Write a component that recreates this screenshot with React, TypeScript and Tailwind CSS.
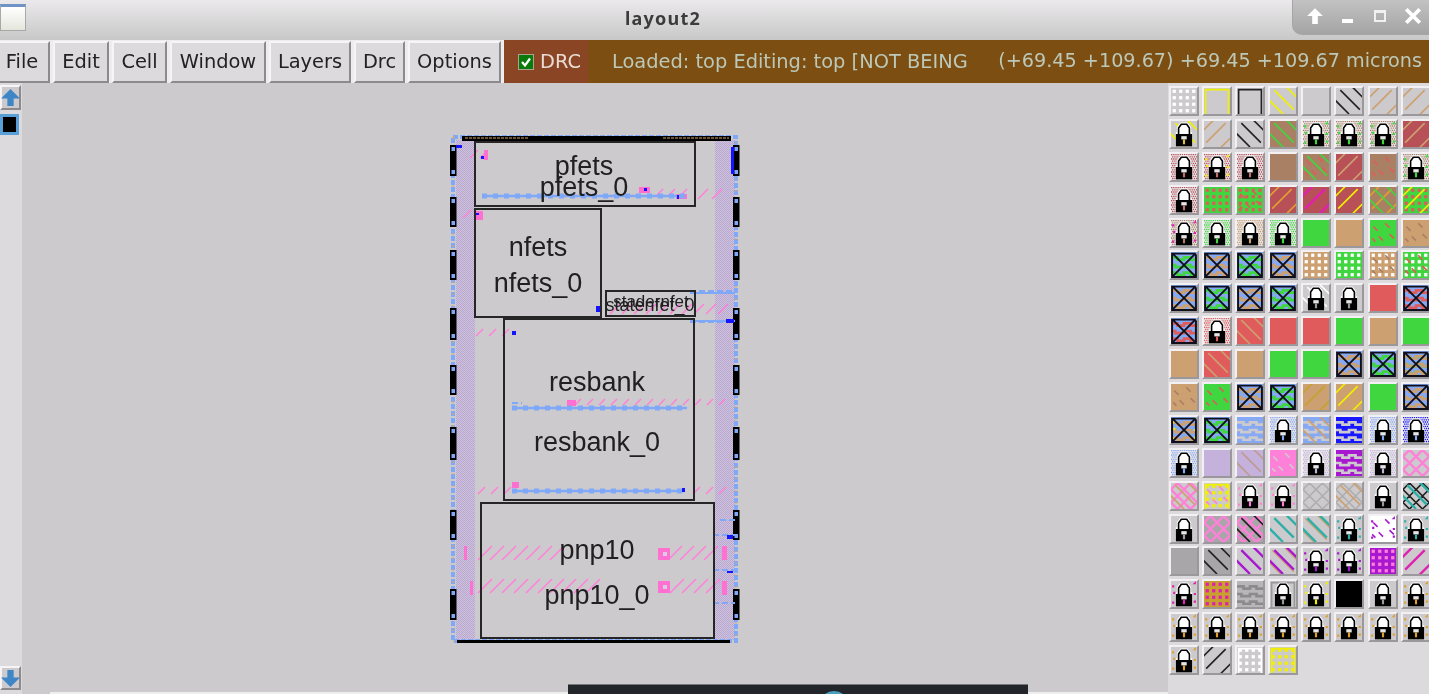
import React from "react";

const GRAY = "#cccacc", TAN = "#cca070", BROWN = "#a98063", ROSE = "#b85058", GREEN = "#3fd63f", RED = "#e05c5c";
const BLUE = "#85a9f5", LILAC = "#c4b2dc", PINK = "#ff80d8", PURPLE = "#a818d0", DEEP = "#1818ff", TEAL = "#2eb0a8";
const YELLOW = "#f0f000", GOLD = "#c8a030", BLACK = "#000000", WHITE = "#ffffff", ORANGE = "#e0a030", MAG = "#e020b0";

type Tile = { bg: string; l?: string[]; lock?: string; x?: boolean };
// layer strings: first char is the pattern, rest is the colour
const t = (bg: string, l: string[] = [], lock?: string, x?: boolean): Tile => ({ bg, l, lock, x });
const lk = (bg: string, l: string[] = [], key = "#9a9a9a") => t(bg, l, key);
const xx = (l: string[]) => t(BLUE, l, undefined, true);

const tiles: Tile[] = [
  t(GRAY, ["d" + WHITE]), t(GRAY, ["y" + YELLOW]), t(GRAY, ["y" + "#222222"]), t(GRAY, ["\\" + YELLOW]), t(GRAY), t(GRAY, ["\\" + "#222222"]), t(GRAY, ["/" + TAN]), t(GRAY, ["/" + TAN]),
  lk(GRAY, ["\\" + YELLOW], "#d8c040"), t(GRAY, ["/" + TAN]), t(GRAY, ["\\" + "#222222"]), t(BROWN, ["\\" + GREEN]), lk(BROWN, ["p" + GREEN], GREEN), lk(BROWN, ["p" + GREEN], GREEN), lk(BROWN, ["p" + GREEN], GREEN), t(ROSE, ["/" + TAN]),
  lk(ROSE, [], "#c07070"), lk(ROSE, ["p" + YELLOW], "#c07070"), lk(ROSE, [], "#c07070"), t(BROWN), t(BROWN, ["\\" + GREEN, "-" + RED]), t(ROSE, ["/" + TAN]), t(BROWN, ["-" + RED]), lk(BROWN, ["p" + GREEN], GREEN),
  lk(ROSE, [], "#c07070"), t(GREEN, ["d" + RED]), t(GREEN, ["d" + RED, "-" + RED]), t(ROSE, ["/" + ORANGE]), t(ROSE, ["/" + MAG]), t(ROSE, ["/" + YELLOW]), t(BROWN, ["/" + ORANGE, "\\" + GREEN]), t(GREEN, ["d" + RED, "/" + YELLOW]),
  lk(BROWN, ["p" + MAG], BROWN), lk(GREEN, [], GREEN), lk(TAN, [], TAN), lk(GREEN, [], GREEN), t(GREEN), t(TAN), t(GREEN, ["-" + RED]), t(TAN, ["-" + BROWN]),
  xx(["w" + GREEN]), xx(["w" + TAN]), xx(["w" + GREEN]), xx(["w" + TAN]), t(TAN, ["d" + WHITE]), t(GREEN, ["d" + WHITE]), t(TAN, ["d" + WHITE, "-" + BROWN]), t(GREEN, ["d" + WHITE, "-" + RED]),
  xx(["w" + TAN]), xx(["w" + GREEN]), xx(["w" + TAN]), xx(["w" + GREEN]), lk(GRAY, ["\\" + WHITE]), lk(GRAY), t(RED), xx(["w" + RED]),
  xx(["w" + RED]), lk(RED, [], RED), t(RED, ["\\" + TAN]), t(RED), t(RED), t(GREEN), t(TAN), t(GREEN),
  t(TAN), t(RED, ["\\" + TAN]), t(TAN), t(GREEN), t(GREEN), xx(["w" + TAN]), xx(["w" + GREEN]), xx(["w" + GREEN, "w" + TAN]),
  t(TAN, ["-" + BROWN]), t(GREEN, ["-" + RED]), xx(["w" + TAN]), xx(["w" + GREEN]), t(TAN, ["/" + GOLD]), t(TAN, ["/" + YELLOW]), t(GREEN), xx(["w" + TAN]),
  xx(["w" + TAN, "p" + YELLOW]), xx(["w" + GREEN]), t(BLUE, ["w" + GRAY]), lk(BLUE, [], BLUE), t(BLUE, ["w" + GRAY, "\\" + TAN]), t(DEEP, ["w" + GRAY]), lk(BLUE, [], BLUE), lk(DEEP, [], BLUE),
  lk(BLUE, [], BLUE), t(LILAC), t(LILAC, ["\\" + "#c09a90"]), t(PINK, ["-" + GRAY]), lk(LILAC, [], LILAC), t(PURPLE, ["w" + GRAY]), lk(LILAC, [], LILAC), t(GRAY, ["L" + PINK]),
  t(GRAY, ["L" + PINK, "\\" + TAN]), t(GRAY, ["y" + YELLOW, "d" + YELLOW, "-" + PINK]), lk(GRAY, ["p" + PINK], PINK), lk(GRAY, ["p" + PINK], PINK), t(GRAY, ["L" + "#b0aeb0"]), t(GRAY, ["L" + "#b0aeb0", "\\" + TAN]), lk(GRAY), t(GRAY, ["L" + "#222222", "\\" + TEAL]),
  lk(GRAY), t("#a8a6a8", ["L" + PINK]), t("#a8a6a8", ["L" + PINK, "\\" + "#222222"]), t(GRAY, ["\\" + TEAL]), t(GRAY, ["b" + TAN, "\\" + TEAL]), lk(GRAY, ["p" + TEAL], TEAL), t(WHITE, ["p" + PURPLE, "-" + PURPLE]), lk(GRAY, ["p" + TEAL], TEAL),
  t("#a8a6a8"), t("#a8a6a8", ["\\" + "#222222"]), t(GRAY, ["\\" + PURPLE]), t(GRAY, ["b" + TAN, "\\" + PURPLE]), lk(GRAY, ["p" + PURPLE], PURPLE), lk(GRAY, ["p" + PURPLE], PURPLE), t(PURPLE, ["d" + PINK]), t(GRAY, ["/" + MAG]),
  lk(GRAY, ["p" + MAG], MAG), t(GOLD, ["d" + MAG]), t("#b8b6b8", ["w" + "#8c8a8c"]), lk(GRAY, ["y" + "#9a989a"]), lk(GRAY, ["p" + YELLOW], YELLOW), t(BLACK), lk(GRAY), lk(GRAY, ["p" + ORANGE], ORANGE),
  ...Array.from({ length: 8 }, () => lk(GRAY, ["p" + ORANGE], ORANGE)),
  lk(GRAY, ["p" + ORANGE], ORANGE), t(GRAY, ["/" + "#222222"]), t(GRAY, ["y" + WHITE, "d" + WHITE]), t(GRAY, ["y" + YELLOW, "d" + YELLOW]),
];

// fine dots behind the stippled lock tiles
const stipple = (() => {
  let d = "";
  for (let y = 0; y < 24; y += 2) for (let x = y % 4 === 0 ? 0 : 1; x < 24; x += 2) d += `M${x} ${y}h1.2v1.2h-1.2z`;
  return d;
})();

const Layer = ({ ch, c }: { ch: string; c: string }) => {
  if (ch === "/" || ch === "\\") {
    const d = ch === "/" ? "M-2 10L10 -2M2 20L20 2M14 26L26 14" : "M14 -2L26 10M4 2L22 20M-2 10L12 24";
    const thick = c === TEAL || c === PURPLE || c === MAG;
    return <path d={d} stroke={c} strokeWidth={thick ? 2.2 : 1.5} fill="none" />;
  }
  if (ch === "b") {
    return <path d="M12 -2L26 12M2 2L22 22M-2 12L10 24" stroke={c} strokeWidth={1.4} fill="none" />;
  }
  if (ch === "d") {
    const pts = [3, 9, 15, 21];
    return <>{pts.map((x) => pts.map((y) => <rect key={`${x}${y}`} x={x - 1.5} y={y - 1.5} width={3} height={3} fill={c} />))}</>;
  }
  if (ch === "p") {
    return <path d="M1 4h2v2h-2zM20 3l3-3v3zM2 10h2v2h-2zM21 11h2v2h-2zM1 19h2v2h-2zM21 18h2v2h-2z" fill={c} />;
  }
  if (ch === "-") {
    return <path d="M3 6l4 4M14 3l4 4M8 15l4 4M18 13l4 4M2 17l3 3" stroke={c} strokeWidth={1.5} fill="none" />;
  }
  if (ch === "w") {
    return <path d="M0 5h6v2h6v-2h6v2h6M0 12h4v2h8v-2h6v2h6M0 19h6v2h6v-2h6v2h6" stroke={c} strokeWidth={2.5} fill="none" />;
  }
  if (ch === "L") {
    return <path d="M0 6L6 0L12 6L18 0L24 6L18 12L24 18L18 24L12 18L6 24L0 18L6 12ZM6 12L12 6L18 12L12 18Z" stroke={c} strokeWidth={c === PINK ? 2.2 : 1.5} fill="none" />;
  }
  // y: open box along top and sides
  return <path d="M1.5 24V1.5H22.5V24" stroke={c} strokeWidth={1.5} fill="none" />;
};

const LayerTile = ({ tile }: { tile: Tile }) => {
  const dotted = tile.lock && tile.bg !== GRAY;
  return (
    <div className="w-[30px] h-[30px] border-2 border-t-[#f2f0f2] border-l-[#f2f0f2] border-b-[#9a989a] border-r-[#9a989a]">
      <svg viewBox="0 0 24 24" className="w-full h-full block">
        <rect width="24" height="24" fill={dotted ? "#e8e6e8" : tile.bg} />
        {dotted && <path d={stipple} fill={tile.bg} />}
        {tile.l?.map((s, i) => <Layer key={i} ch={s[0]} c={s.slice(1)} />)}
        {tile.x && <path d="M1 23V1.5H22L23 3V23H1ZM1.5 1.5L22.5 22.5M22.5 1.5L1.5 22.5" stroke="#10101c" strokeWidth={1.8} fill="none" />}
        {tile.lock && (
          <>
            <path d="M5 24V11H6V6L9 2H15L18 6V11H19V24Z" fill="#ffffff" stroke="#ffffff" strokeWidth={1.2} />
            <path d="M7 12V6.5L9.5 3H14.5L17 6.5V12" stroke="#000000" strokeWidth={1.5} fill="none" />
            <rect x="4.5" y="12" width="15" height="11.5" fill="#000000" />
            <rect x="9.5" y="14" width="5" height="3" fill="#e6e6e6" />
            <rect x="11" y="17" width="2" height="4.5" fill={tile.lock} />
          </>
        )}
      </svg>
    </div>
  );
};

const hatch = (x0: number, x1: number, y: number, step: number, len: number) => {
  let d = "";
  for (let x = x0; x <= x1; x += step) d += `M${x} ${y}l${len} ${-len}`;
  return d;
};

const padsY = [[145, 176], [197, 227], [250, 280], [308, 340], [365, 395], [427, 460], [510, 540], [589, 620]];

const LayoutArt = () => (
  <svg viewBox="440 125 310 530" className="absolute inset-0 w-[310px] h-[530px]">
    <defs>
      <pattern id="mesh" width="2" height="2" patternUnits="userSpaceOnUse">
        <rect width="2" height="2" fill="#cdc4d8" />
        <rect width="1" height="1" fill="#baa6d4" />
        <rect x="1" y="1" width="1" height="1" fill="#baa6d4" />
      </pattern>
    </defs>
    {/* side rails */}
    <rect x="456" y="140" width="19" height="500" fill="url(#mesh)" />
    <rect x="715" y="140" width="20" height="500" fill="url(#mesh)" />
    {/* dashed boundary */}
    <rect x="453" y="137" width="283" height="504" fill="none" stroke="#7fa8f8" strokeWidth={4} strokeDasharray="5 2" />
    <rect x="453" y="137" width="283" height="504" fill="none" stroke="#d8a868" strokeWidth={1.2} strokeDasharray="2 10" />
    {/* pads */}
    {padsY.map(([a, b]) => (
      <g key={a}>
        <rect x="450" y={a} width="6.5" height={b - a} fill="#000" />
        <rect x="451.5" y={a + 2} width="3.5" height="4" fill="#7fa8f8" />
        <rect x="451.5" y={b - 6} width="3.5" height="4" fill="#7fa8f8" />
        <rect x="733" y={a} width="6.5" height={b - a} fill="#000" />
        <rect x="734.5" y={a + 2} width="3.5" height="4" fill="#7fa8f8" />
        <rect x="734.5" y={b - 6} width="3.5" height="4" fill="#7fa8f8" />
      </g>
    ))}
    <rect x="462" y="136" width="269" height="5" fill="#000" />
    <path stroke="#d8a868" strokeWidth={1.2} strokeDasharray="3 1" d="M465 138H529M663 138H729" />
    <rect x="457" y="640" width="273" height="3" fill="#000" />
    {/* pink hatching */}
    <path
      stroke="#ff80d8"
      strokeWidth={1.5}
      fill="none"
      d={[
        hatch(657, 682, 195, 12, 6), hatch(698, 716, 199, 14, 10), hatch(470, 480, 158, 10, 8), hatch(463, 463, 218, 1, 8),
        hatch(610, 718, 314, 12, 10), hatch(476, 502, 336, 13, 7), hatch(575, 730, 405, 12, 6),
        hatch(478, 505, 494, 13, 7), hatch(693, 720, 494, 13, 7),
        hatch(478, 555, 560, 12, 14), hatch(668, 712, 560, 12, 14), hatch(478, 590, 593, 12, 14), hatch(670, 712, 593, 12, 14),
      ].join("")}
    />
    <path fill="#ff70d0" d="M639 187h11v6h-11zM676 194h11v5h-11zM567 400h9v6h-9zM512 482h7v6h-7zM658 548h12v12h-12zM658 581h12v12h-12zM484 150h4v10h-4zM476 211h7v9h-7zM464 546h3v14h-3zM470 581h3v14h-3zM722 546h5v14h-5zM722 581h5v14h-5z" />
    <path fill="#d8cce4" d="M663 552h4v4h-4zM663 585h4v4h-4z" />
    {/* metal */}
    <path stroke="#7fa8f8" strokeWidth={2.5} fill="none" d="M482 196H685M512 408H687M512 491H685" />
    <path stroke="#7fa8f8" strokeWidth={5} fill="none" strokeDasharray="5 6" d="M482 196H685M512 408H687M512 491H685" />
    <path stroke="#7fa8f8" strokeWidth={2} fill="none" strokeDasharray="6 3" d="M512 403H522M690 291H735M690 322H735M713 535H735M713 570H735M713 603H735M720 520H735" />
    <path stroke="#7fa8f8" strokeWidth={2} fill="none" d="M690 293H735M690 321H735" />
    <path fill="#1414ff" d="M456 145h6v3h-6zM481 156h3v3h-3zM731 147h3v27h-3zM644 188h3v3h-3zM677 195h2v4h-2zM476 213h3v2h-3zM596 306h4v6h-4zM726 319h8v4h-8zM512 331h4v4h-4zM682 488h3v4h-3zM727 535h6v4h-6zM727 571h6v2h-6z" />
  </svg>
);

const Cell = ({ cls, children }: { cls: string; children?: React.ReactNode }) => (
  <div className={`absolute border-2 border-[#262626] ${cls}`}>{children}</div>
);

const Label = ({ cls, children }: { cls: string; children: React.ReactNode }) => (
  <span className={`absolute -translate-x-1/2 -translate-y-1/2 whitespace-nowrap text-[27px] leading-none text-[#202020] ${cls}`}>{children}</span>
);

const Diagram = () => (
  <div className="absolute left-[418px] top-[42px] w-[310px] h-[530px] font-['Liberation_Sans',sans-serif]">
    <LayoutArt />
    <Cell cls="left-[34px] top-[16px] w-[222px] h-[66px]" />
    <Cell cls="left-[34px] top-[83px] w-[128px] h-[110px]" />
    <Cell cls="left-[165px] top-[165px] w-[91px] h-[27px]" />
    <Cell cls="left-[63px] top-[193px] w-[192px] h-[183px]" />
    <Cell cls="left-[40px] top-[377px] w-[235px] h-[137px]" />
    <Label cls="left-[144px] top-[41px]">pfets</Label>
    <Label cls="left-[144px] top-[62px]">pfets_0</Label>
    <Label cls="left-[98px] top-[122px]">nfets</Label>
    <Label cls="left-[98px] top-[158px]">nfets_0</Label>
    <Label cls="left-[211px] top-[176px] text-[17px]!">stadernfet</Label>
    <Label cls="left-[210px] top-[180px] text-[18px]!">statenfet_0</Label>
    <Label cls="left-[157px] top-[257px]">resbank</Label>
    <Label cls="left-[157px] top-[317px]">resbank_0</Label>
    <Label cls="left-[157px] top-[425px]">pnp10</Label>
    <Label cls="left-[157px] top-[470px]">pnp10_0</Label>
  </div>
);

const menus = [
  { label: "File", w: "w-[53px] -ml-[3px] pr-[3px]" },
  { label: "Edit", w: "w-[56px]" },
  { label: "Cell", w: "w-[55px]" },
  { label: "Window", w: "w-[96px]" },
  { label: "Layers", w: "w-[82px]" },
  { label: "Drc", w: "w-[51px]" },
  { label: "Options", w: "w-[93px]" },
];

const bevel = "border-2 border-t-[#f6f4f6] border-l-[#f6f4f6] border-b-[#8c8a8c] border-r-[#8c8a8c]";

export default function App() {
  return (
    <div className="relative w-[1429px] h-[694px] overflow-hidden flex flex-col bg-[#cccacc] blur-[0.35px] font-['DejaVu_Sans',sans-serif]">
      {/* title bar */}
      <div className="relative h-[40px] shrink-0 flex items-center justify-center bg-gradient-to-b from-[#ebe9eb] to-[#c8c8c8]">
        <div className="absolute left-0 top-[4px] w-[26px] h-[27px] border border-[#a8a8a8] border-t-[3px] border-t-[#6e93c4] bg-gradient-to-b from-white to-[#e4e6dc]" />
        <span className="ml-[-103px] mb-[4px] text-[18px] font-bold tracking-[1.2px] text-[#3c3c3c] font-['Noto_Sans',sans-serif]">layout2</span>
        <div className="absolute right-0 top-0 w-[137px] h-[35px] rounded-bl-[10px] border-l border-b border-[#a6a6a6] bg-gradient-to-b from-[#c2c2c2] to-[#a4a4a4] flex items-center justify-between pl-[13px] pr-[7px] pb-[2px]">
          <svg viewBox="0 0 16 16" className="w-[18px] h-[18px]"><path d="M8 1L15 8H10.5V15H5.5V8H1Z" fill="#fff" /></svg>
          <svg viewBox="0 0 16 16" className="w-[16px] h-[16px]"><rect x="2" y="11" width="11" height="4" fill="#fff" /></svg>
          <svg viewBox="0 0 16 16" className="w-[16px] h-[16px]"><path d="M2 2H14V14H2Z M4 5V12H12V5Z" fill="#f0f0f0" fillRule="evenodd" /></svg>
          <svg viewBox="0 0 16 16" className="w-[18px] h-[18px]"><path d="M2 2L14 14M14 2L2 14" stroke="#fff" strokeWidth={3.4} /></svg>
        </div>
      </div>

      {/* menu row */}
      <div className="h-[43px] shrink-0 flex items-stretch bg-[#eeecee] text-[19.4px] text-[#222222]">
        <div className="flex gap-[3px] pt-[1px] pr-[3px]">
          {menus.map((m) => (
            <div key={m.label} className={`${m.w} flex items-center justify-center bg-[#dcdadc] ${bevel}`}>{m.label}</div>
          ))}
        </div>
        <div className="w-[84px] flex items-center gap-[6px] pl-[14px] bg-[#8a4524] text-[#eadcd4]">
          <span className="w-[16px] h-[16px] flex items-center justify-center border border-[#b0a090] bg-[#0a7a0a]">
            <svg viewBox="0 0 12 12" className="w-[12px] h-[12px]"><path d="M2 6L5 9.5L10 2.5" stroke="#fff" strokeWidth={2.2} fill="none" /></svg>
          </span>
          DRC
        </div>
        <div className="flex-1 flex items-center justify-between pl-[24px] pr-[7px] bg-[#7c4e12] text-[#bcc8b8]">
          <span>Loaded: top Editing: top [NOT BEING</span>
          <span className="text-[19.2px]">(+69.45 +109.67) +69.45 +109.67 microns</span>
        </div>
      </div>

      <div className="flex-1 flex min-h-0">
        {/* cell stack */}
        <div className="w-[22px] shrink-0 flex flex-col justify-between bg-[#dcdadc] pt-[2px] pb-[4px]">
          <div className="flex flex-col gap-[4px]">
            <div className={`w-[21px] h-[25px] flex items-center justify-center bg-[#cccacc] ${bevel}`}>
              <svg viewBox="0 0 18 18" className="w-[19px] h-[19px] shrink-0"><path d="M9 1L18 10H12V17H6V10H0Z" fill="#3f86c6" /></svg>
            </div>
            <div className="w-[19px] h-[21px] border-[3px] border-[#5aa0d8] bg-black" />
          </div>
          <div className={`w-[21px] h-[24px] flex items-center justify-center bg-[#cccacc] ${bevel}`}>
            <svg viewBox="0 0 18 18" className="w-[19px] h-[19px] shrink-0"><path d="M9 17L18 8H12V1H6V8H0Z" fill="#3f86c6" /></svg>
          </div>
        </div>

        {/* layout canvas */}
        <div className="relative flex-1 bg-[#cccacc]">
          <Diagram />
        </div>

        {/* layer palette */}
        <div className="w-[261px] shrink-0 bg-[#dcdadc] pl-[1px] pt-[3px] grid grid-cols-[repeat(8,33.1px)] auto-rows-[32.9px] content-start">
          {tiles.map((tile, i) => <LayerTile key={i} tile={tile} />)}
        </div>
      </div>

      {/* window peeking in from below */}
      <div className="absolute left-[50px] right-[261px] bottom-0 h-[2px] bg-[#eeeeee]" />
      <div className="absolute left-[568px] bottom-0 w-[460px] h-[10px] border-t border-[#777777] bg-[#22262a] overflow-hidden">
        <div className="absolute left-[251px] top-[6px] w-[30px] h-[30px] rounded-full bg-[#4aa0c0]" />
      </div>
    </div>
  );
}
